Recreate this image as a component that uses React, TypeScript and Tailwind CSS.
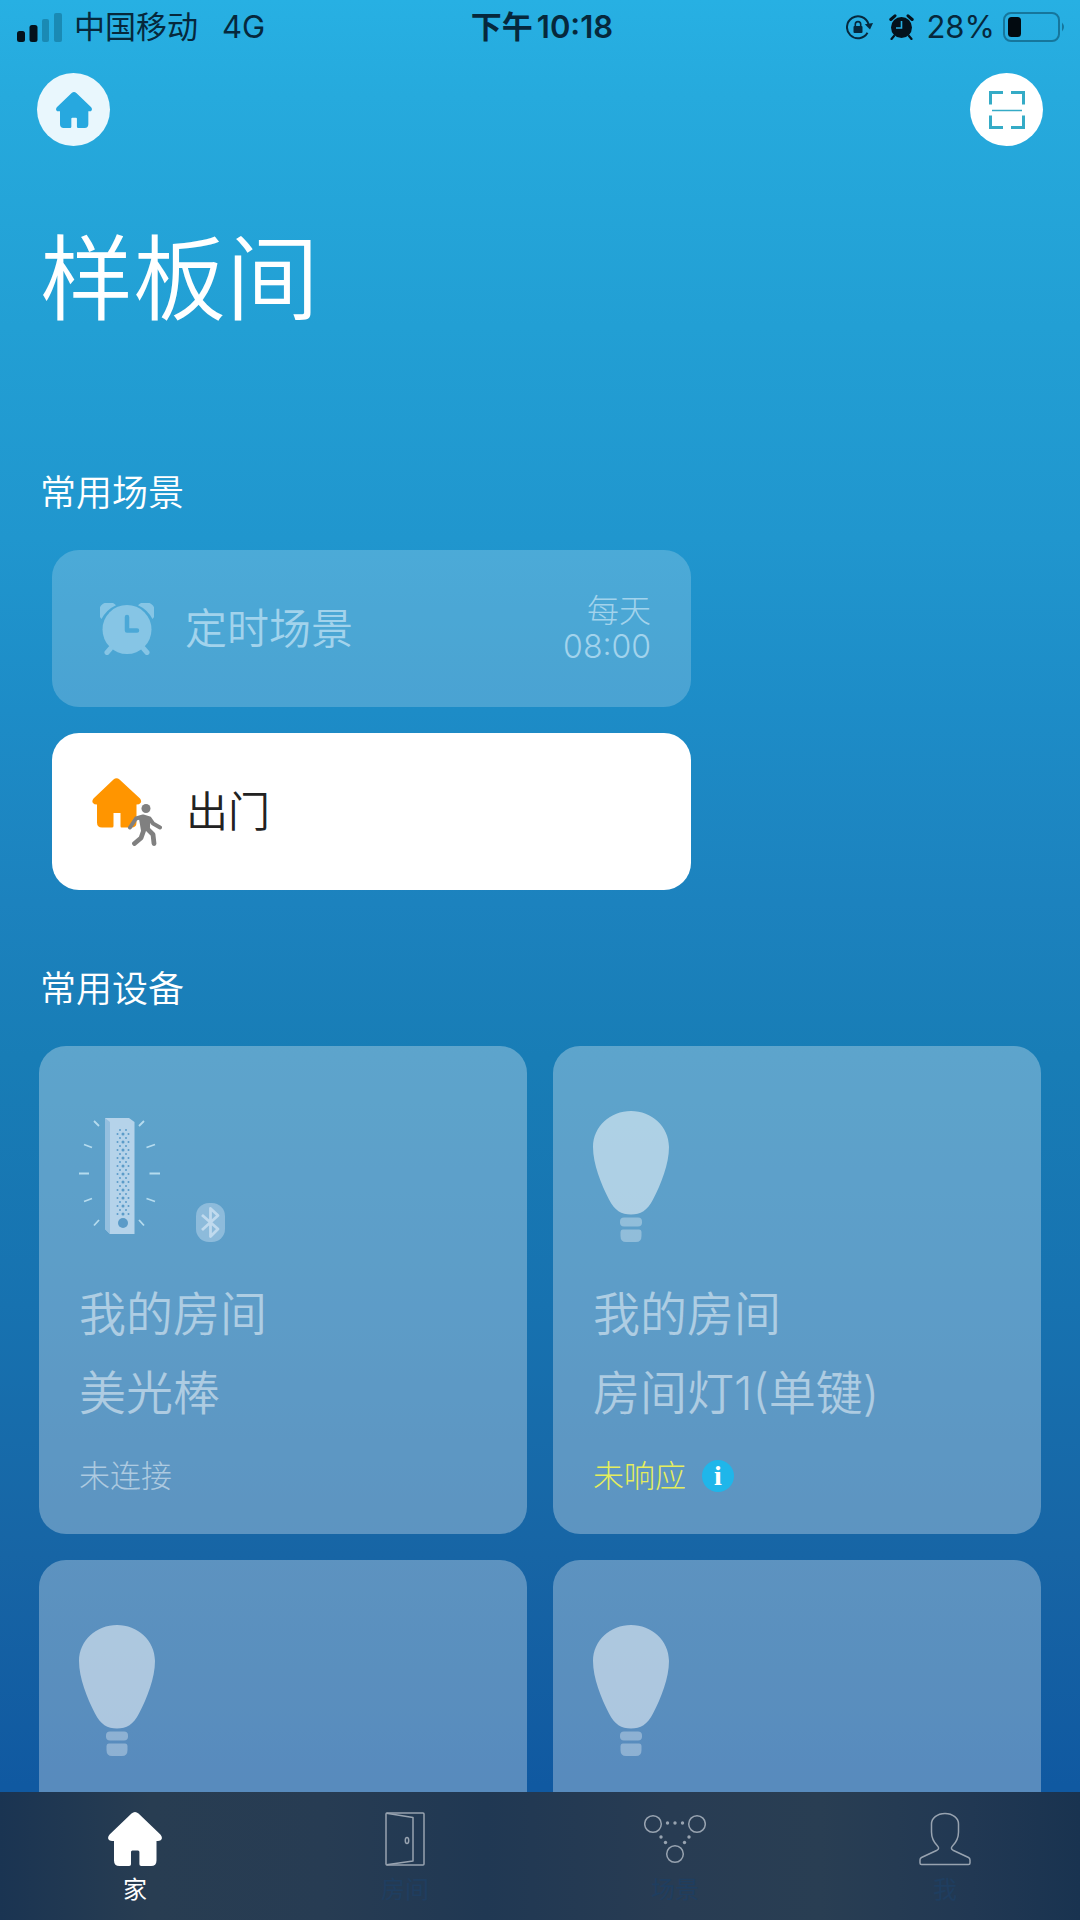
import type { ReactNode } from "react";

type Device = {
  id: string;
  room: string;
  name: string;
  status: string;
  kind: "bulb" | "stick";
  warning?: boolean;
};

const devices: Device[] = [
  { id: "stick", room: "我的房间", name: "美光棒", status: "未连接", kind: "stick" },
  {
    id: "light-1",
    room: "我的房间",
    name: "房间灯1(单键)",
    status: "未响应",
    kind: "bulb",
    warning: true,
  },
  { id: "light-2", room: "", name: "", status: "", kind: "bulb" },
  { id: "light-3", room: "", name: "", status: "", kind: "bulb" },
];

/* ---------- icons ---------- */

function HomeIcon({ className }: { className?: string }) {
  return (
    <svg viewBox="0 0 54 54" className={className} fill="currentColor" aria-hidden="true">
      <path d="M23.5 1.6Q27-1.4 30.500 1.600L52.400 22.600Q54.600 25 53.600 27.200Q52.800 29 50 29H48.500V48.500Q48.500 54 43 54H33.200Q31.400 54 31.400 52.200V40Q31.400 38.500 30 38.500H24.400Q23 38.500 23 40V52.200Q23 54 21.200 54H11.500Q6 54 6 48.500V29H4Q1.200 29 .4 27.200Q-.6 25 1.600 22.600Z" />
    </svg>
  );
}

function ScanIcon() {
  return (
    <svg viewBox="0 0 36 38" className="h-[38px] w-9" fill="none" stroke="#35abc6" strokeWidth="3" aria-hidden="true">
      <path d="M1.500 13.500V1.500H14M22 1.500H34.500V13.500M1.500 24.500V36.500H14M22 36.500H34.500V24.500" />
      <path d="M3 19.500H33" strokeWidth="1.500" />
    </svg>
  );
}

function SignalIcon() {
  return (
    <svg viewBox="0 0 45 29" className="h-[29px] w-[45px]" aria-hidden="true">
      <rect x="0" y="18" width="8" height="11" rx="2.500" fill="#04121c" />
      <rect x="12.500" y="12" width="8" height="17" rx="2.500" fill="#04121c" />
      <rect x="25" y="6" width="7" height="23" rx="2" fill="#1a8ab4" />
      <rect x="37" y="0" width="8" height="29" rx="2" fill="#1a8ab4" />
    </svg>
  );
}

function RotationLockIcon() {
  return (
    <svg viewBox="0 0 27 25" className="h-[25px] w-[27px]" aria-hidden="true">
      <path d="M21.500 17.800A11 11 0 1 1 22.500 9" fill="none" stroke="#06283c" strokeWidth="2" />
      <path d="M18.800 9.200L27 8L24 14.500Z" fill="#06283c" />
      <rect x="7.500" y="11" width="9" height="7" rx="1" fill="#06283c" />
      <path d="M9.300 11.500V9.300a2.700 2.700 0 0 1 5.400 0V11.500" fill="none" stroke="#06283c" strokeWidth="1.600" />
    </svg>
  );
}

function StatusAlarmIcon() {
  return (
    <svg viewBox="0 0 25 26" className="h-[26px] w-[25px]" aria-hidden="true">
      <circle cx="12.500" cy="13.500" r="10.500" fill="#04121c" />
      <path d="M1.800 5.500L6 1.800M19 1.800L23.200 5.500" stroke="#04121c" strokeWidth="3" strokeLinecap="round" />
      <path d="M5 22L2.500 25M20 22L22.500 25" stroke="#04121c" strokeWidth="2.200" strokeLinecap="round" />
      <path d="M12.500 7V14H7" fill="none" stroke="#28b0e3" strokeWidth="1.600" />
    </svg>
  );
}

function BatteryIcon() {
  return (
    <svg viewBox="0 0 64 30" className="h-[30px] w-16" aria-hidden="true">
      <rect x="1" y="1" width="55" height="28" rx="7" fill="none" stroke="#16769c" strokeWidth="2" />
      <rect x="5" y="5" width="13" height="20" rx="3.500" fill="#020a10" />
      <path d="M59 10.500Q63 15 59 19.500Z" fill="#16769c" />
    </svg>
  );
}

function AlarmIcon() {
  return (
    <svg viewBox="0 0 54 52" className="h-[52px] w-[54px]" aria-hidden="true">
      <g fill="#86c5e5">
        <path d="M1.500 16A9.500 9.500 0 0 1 16 2.200Q6.500 6.500 1.500 16Z" />
        <path d="M52.500 16A9.500 9.500 0 0 0 38 2.200Q47.500 6.500 52.500 16Z" />
        <circle cx="27" cy="26.500" r="24.500" />
      </g>
      <path d="M10.500 45.500L7 49.500M43.500 45.500L47 49.500" stroke="#86c5e5" strokeWidth="5" strokeLinecap="round" />
      <path d="M27 14V27.500H37" fill="none" stroke="#4ba8d7" strokeWidth="4.500" strokeLinecap="round" strokeLinejoin="round" />
    </svg>
  );
}

function LeaveHomeIcon() {
  return (
    <svg viewBox="0 0 70 68" className="h-[68px] w-[70px]" aria-hidden="true">
      <path
        d="M21.500 1.500Q24.500-1 27.500 1.500L48 20.500Q50 23 48.500 25Q47.500 26.500 44.500 26.500V44.500Q44.500 49.500 39.500 49.500H29.500Q28.500 49.500 28.500 48V35H21.500V48Q21.500 49.500 20 49.500H10Q5 49.500 5 44.500V26.500Q2 26.500 1 25Q-.5 23 1.500 20.500Z"
        fill="#ff9500"
      />
      <g stroke="#808080" fill="none" strokeLinecap="round" strokeLinejoin="round">
        <path d="M38 49.500L44 40.500L51 38.500L57.500 40.500L61 45.500L68 49.500" strokeWidth="4" />
        <path d="M49.500 41L51.500 53L49 60L42.500 65.500" strokeWidth="4.800" />
        <path d="M56 41L55.500 51L61 56.500L62 65.500" strokeWidth="4.800" />
      </g>
      <path d="M48.500 39H58L56.500 53H50Z" fill="#808080" />
      <circle cx="54" cy="30.500" r="4.500" fill="#808080" />
    </svg>
  );
}

function BulbIcon() {
  return (
    <svg viewBox="0 0 76 131" className="h-[131px] w-[76px]" fill="#fff" aria-hidden="true">
      <path
        d="M38 0C58.500 0 76 15.500 76 36C76 53 68 73 60 88.500C54.500 99.500 47.500 103.500 38 103.500C28.500 103.500 21.500 99.500 16 88.500C8 73 0 53 0 36C0 15.500 17.500 0 38 0Z"
        fillOpacity=".5"
      />
      <rect x="27" y="106.500" width="22" height="9" rx="4" fillOpacity=".32" />
      <path d="M30 118.500H46Q48.500 118.500 48.500 121.500V125Q48.500 131 43 131H33Q27.500 131 27.500 125V121.500Q27.500 118.500 30 118.500Z" fillOpacity=".32" />
    </svg>
  );
}

function LightStickIcon() {
  const rows = Array.from({ length: 22 }, (_, i) => 12 + i * 4);
  return (
    <svg viewBox="0 0 81 116" className="h-[116px] w-[81px]" aria-hidden="true">
      <path d="M26 0H50L55.500 4V116H31L26 111Z" fill="#b5d3ea" />
      <path d="M26 0L31 4V116L26 111Z" fill="#94bfdf" />
      <g fill="#5b9bc8">
        {rows.map((y, i) =>
          i % 2 === 0 ? (
            <g key={y}>
              <circle cx="41" cy={y} r="1" />
              <circle cx="47" cy={y} r="1" />
            </g>
          ) : (
            <g key={y}>
              <circle cx="38.500" cy={y} r="1" />
              <circle cx="44" cy={y} r="1.500" />
              <circle cx="49.500" cy={y} r="1" />
            </g>
          ),
        )}
        <circle cx="44" cy="105" r="5" />
      </g>
      <path
        d="M15 3L20 8M65 3L60 8M5 26.500L13 29.500M76 26.500L67.500 29.500M0 55.500H10M70.500 55.500H81M5 83.500L13 80.500M76 83.500L67.500 80.500M15 107.500L20 102M65 107.500L60 102"
        stroke="#b5dbee"
        strokeWidth="1.800"
        fill="none"
      />
    </svg>
  );
}

function BluetoothIcon() {
  return (
    <svg viewBox="0 0 29 39" className="h-[39px] w-[29px]" aria-hidden="true">
      <rect width="29" height="39" rx="13" fill="#8dbbdb" />
      <path d="M6 12L22 26L14.500 33.500V5.500L22 12.500L6 27" fill="none" stroke="#c0daee" strokeWidth="2.800" strokeLinejoin="round" />
    </svg>
  );
}

function DoorIcon() {
  return (
    <svg viewBox="0 0 40 54" className="h-[54px] w-10" fill="none" stroke="#98a3b0" strokeWidth="1.500" strokeLinejoin="round" aria-hidden="true">
      <rect x="1" y="1" width="38" height="52" rx="1" />
      <path d="M1.500 1.200L28 5.500V49L1.500 52.800" />
      <ellipse cx="22" cy="28.500" rx="1.700" ry="3" />
    </svg>
  );
}

function NodesIcon() {
  return (
    <svg viewBox="0 0 62 54" className="h-[54px] w-[62px]" aria-hidden="true">
      <g fill="none" stroke="#98a3b0" strokeWidth="1.500">
        <circle cx="9" cy="12" r="8.300" />
        <circle cx="53" cy="12" r="8.300" />
        <circle cx="31" cy="42" r="8.300" />
      </g>
      <g fill="#98a3b0">
        <circle cx="23.500" cy="11" r="1.700" />
        <circle cx="31" cy="11" r="1.700" />
        <circle cx="38.500" cy="11" r="1.700" />
        <circle cx="17" cy="25" r="1.700" />
        <circle cx="21.500" cy="30.500" r="1.700" />
        <circle cx="45" cy="25" r="1.700" />
        <circle cx="40.500" cy="30.500" r="1.700" />
      </g>
    </svg>
  );
}

function PersonIcon() {
  return (
    <svg viewBox="0 0 52 54" className="h-[54px] w-[52px]" fill="none" stroke="#98a3b0" strokeWidth="1.500" strokeLinejoin="round" aria-hidden="true">
      <path d="M26 1.500C18 1.500 12.500 6.500 12.500 12V20C12.500 27 15 30.500 18.500 34C20 35.500 20 37 18 38.200L2.500 45.500Q1 46.200 1 48V51Q1 52.500 2.500 52.500H49.500Q51 52.500 51 51V48Q51 46.200 49.500 45.500L34 38.200C32 37 32 35.500 33.500 34C37 30.500 39.500 27 39.500 20V12C39.500 6.500 34 1.500 26 1.500Z" />
    </svg>
  );
}

/* ---------- pieces ---------- */

function StatusBar() {
  return (
    <div className="grid h-[54px] grid-cols-[1fr_auto_1fr] items-center pl-[17px] pr-[13px] text-[31px] leading-9 text-[#06283c]">
      <div className="flex items-center gap-3">
        <SignalIcon />
        <span>中国移动</span>
        <span className="ml-3">4G</span>
      </div>
      <div className="flex gap-1 font-semibold">
        <span>下午</span>
        <span>10:18</span>
      </div>
      <div className="flex items-center justify-end">
        <RotationLockIcon />
        <span className="ml-4">
          <StatusAlarmIcon />
        </span>
        <span className="ml-3">28%</span>
        <span className="ml-2">
          <BatteryIcon />
        </span>
      </div>
    </div>
  );
}

function DeviceCard({ device }: { device: Device }) {
  return (
    <button
      type="button"
      aria-label={device.name || "灯"}
      className="flex aspect-square flex-col items-start rounded-[27px] bg-white/30 px-10 pt-[65px] text-left text-white/50"
    >
      <div className="flex h-[131px] items-end">
        {device.kind === "bulb" ? (
          <BulbIcon />
        ) : (
          <div className="flex items-end gap-9">
            <div className="pb-2">
              <LightStickIcon />
            </div>
            <BluetoothIcon />
          </div>
        )}
      </div>
      <div className="mt-8 text-[47px] font-[350] leading-[79px]">
        <div>{device.room}</div>
        <div>{device.name}</div>
      </div>
      {device.warning ? (
        <div className="mt-[26px] flex items-center gap-4 text-[31px] font-light leading-9 text-[#e6ee5c]">
          {device.status}
          <span className="flex size-8 items-center justify-center rounded-full bg-[#1fb6ea] font-['Liberation_Serif',serif] text-[28px] font-bold leading-8 text-white">
            i
          </span>
        </div>
      ) : (
        <div className="mt-[26px] text-[31px] font-light leading-9">{device.status}</div>
      )}
    </button>
  );
}

function Tab({ icon, label, active }: { icon: ReactNode; label: string; active?: boolean }) {
  return (
    <a
      href="#"
      aria-current={active ? "page" : undefined}
      className={`flex flex-col items-center gap-2 pt-5 text-2xl leading-8 ${active ? "text-white" : "text-[#1f3e60]"}`}
    >
      {icon}
      <span>{label}</span>
    </a>
  );
}

export default function App() {
  return (
    <div className="flex h-screen flex-col bg-[linear-gradient(180deg,#27b0e3_0%,#26aadd_5%,#229fd4_17%,#2096ce_28%,#1d8cc7_37%,#1c82be_47%,#187db6_55%,#1772b0_68%,#1765a5_81%,#1059a1_93%)] font-['Inter','Noto_Sans_CJK_SC',sans-serif] text-white">
      <main className="flex-1 overflow-y-auto pb-8 [scrollbar-width:none]">
        <StatusBar />

        <header className="mt-[19px] flex justify-between px-[37px]">
          <button type="button" aria-label="家庭" className="flex size-[73px] items-center justify-center rounded-full bg-[#e9f7fd] text-[#27a8df]">
            <HomeIcon className="size-9" />
          </button>
          <button type="button" aria-label="扫一扫" className="flex size-[73px] items-center justify-center rounded-full bg-white">
            <ScanIcon />
          </button>
        </header>

        <h1 className="mt-[77px] px-10 text-[93px] font-[350] leading-[112px]">样板间</h1>

        {/* scenes */}
        <section>
          <h2 className="mt-[136px] px-10 text-[36px] font-[350] leading-[44px]">常用场景</h2>
          <div className="mt-[35px] flex max-w-[743px] flex-col gap-[26px] px-[52px] text-[42px] font-[350]">
            <button type="button" className="flex h-[157px] items-center rounded-[27px] bg-white/20 pl-12 pr-10 text-[#a2d3ec]">
              <AlarmIcon />
              <span className="ml-[31px]">定时场景</span>
              <span className="ml-auto text-right text-[32px] font-light leading-9">
                每天
                <br />
                08:00
              </span>
            </button>
            <button type="button" className="flex h-[157px] items-center rounded-[27px] bg-white pl-10 pr-10 text-[#222]">
              <LeaveHomeIcon />
              <span className="ml-6">出门</span>
            </button>
          </div>
        </section>

        {/* devices */}
        <section>
          <h2 className="mt-[77px] px-10 text-[36px] font-[350] leading-[44px]">常用设备</h2>
          <div className="mt-[35px] grid grid-cols-2 gap-[26px] px-[39px]">
            {devices.map((device) => (
              <DeviceCard key={device.id} device={device} />
            ))}
          </div>
        </section>
      </main>

      <nav className="grid h-32 shrink-0 grid-cols-4 bg-[linear-gradient(90deg,#1a3452_0%,#283d52_14%,#273c53_30%,#203853_45%,#283c53_62%,#293e53_76%,#213853_90%,#193350_100%)]">
        <Tab icon={<HomeIcon className="size-[54px]" />} label="家" active />
        <Tab icon={<DoorIcon />} label="房间" />
        <Tab icon={<NodesIcon />} label="场景" />
        <Tab icon={<PersonIcon />} label="我" />
      </nav>
    </div>
  );
}
